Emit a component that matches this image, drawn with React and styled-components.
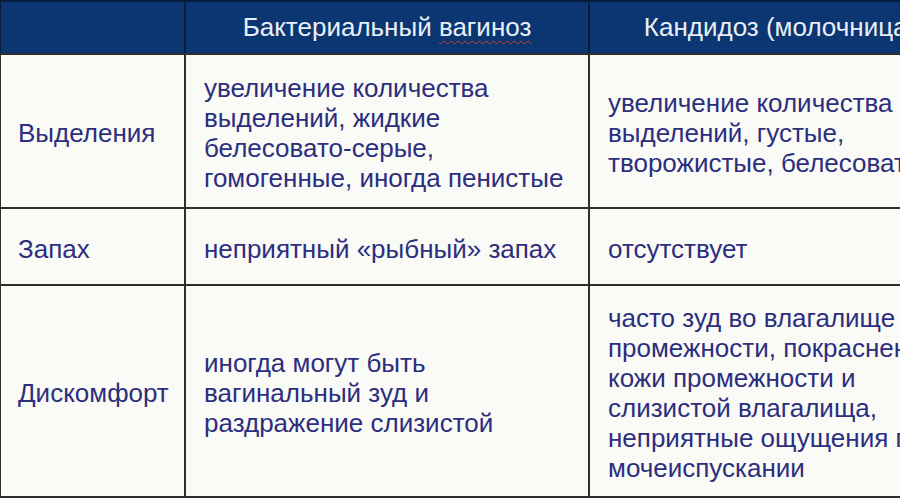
import React from 'react';
import styled, { createGlobalStyle } from 'styled-components';

const GlobalStyle = createGlobalStyle`
  html, body {
    margin: 0;
    padding: 0;
    background: #fafaf6;
    overflow: hidden;
  }
`;

const Page = styled.div`
  width: 900px;
  height: 500px;
  overflow: hidden;
  background: #fafaf6;
  font-family: "Liberation Sans", Arial, sans-serif;
`;

const Table = styled.div`
  width: 970px;
  display: flex;
  flex-direction: column;
  gap: 2px;
  background: #2e2e2e;
  padding: 0 0 2px 0;
`;

const HeaderRow = styled.div`
  display: grid;
  grid-template-columns: 183px 402px 380px;
  column-gap: 2px;
  background: #061b3e;
  padding: 2px 0 0 1px;
  height: 51px;
`;

const HeadCell = styled.div`
  background: #0b3671;
  color: #e9eef7;
  font-size: 26px;
  display: flex;
  align-items: center;
  justify-content: center;
  padding-bottom: 1px;
  white-space: nowrap;
`;

const Misspelled = styled.span`
  text-decoration: underline wavy #d23a3a;
  text-decoration-thickness: 1px;
  text-underline-offset: 4px;
`;

const Row = styled.div`
  display: grid;
  grid-template-columns: 183px 402px 380px;
  column-gap: 2px;
  padding-left: 1px;
  height: ${p => p.$h}px;
`;

const Cell = styled.div`
  background: #fafaf6;
  color: #2c2e7e;
  font-size: 26px;
  line-height: 30px;
  display: flex;
  align-items: center;
  padding: 4px 0 0 ${p => (p.$first ? 17 : 18)}px;
  white-space: pre;
  overflow: hidden;
`;

const rows = [
  {
    h: 152,
    label: 'Выделения',
    bv: 'увеличение количества\nвыделений, жидкие\nбелесовато-серые,\nгомогенные, иногда пенистые',
    kd: 'увеличение количества\nвыделений, густые,\nтворожистые, белесоватые',
  },
  {
    h: 75,
    label: 'Запах',
    bv: 'неприятный «рыбный» запах',
    kd: 'отсутствует',
  },
  {
    h: 210,
    label: 'Дискомфорт',
    bv: 'иногда могут быть\nвагинальный зуд и\nраздражение слизистой',
    kd: 'часто зуд во влагалище и\nпромежности, покраснение\nкожи промежности и\nслизистой влагалища,\nнеприятные ощущения при\nмочеиспускании',
  },
];

export default function App() {
  return (
    <Page>
      <GlobalStyle />
      <Table>
        <HeaderRow>
          <HeadCell />
          <HeadCell>
            Бактериальный&nbsp;<Misspelled>вагиноз</Misspelled>
          </HeadCell>
          <HeadCell>Кандидоз (молочница)</HeadCell>
        </HeaderRow>
        {rows.map(r => (
          <Row key={r.label} $h={r.h}>
            <Cell $first>{r.label}</Cell>
            <Cell>{r.bv}</Cell>
            <Cell>{r.kd}</Cell>
          </Row>
        ))}
      </Table>
    </Page>
  );
}
